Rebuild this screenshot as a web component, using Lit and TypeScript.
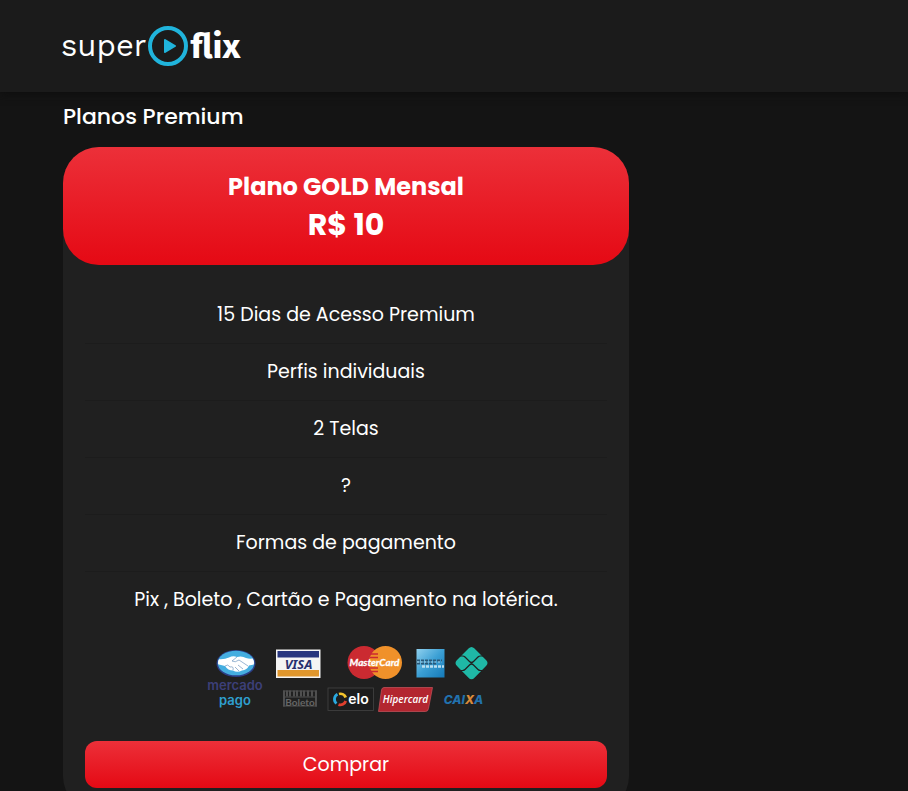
import { LitElement, html, css } from "lit";
import { customElement } from "lit/decorators.js";

@customElement("payment-logos")
class PaymentLogos extends LitElement {
  static styles = css`
    :host {
      display: block;
    }
    svg {
      display: block;
      margin: 0 auto;
    }
    .round {
      font-family: "Lato", "Liberation Sans", sans-serif;
      font-weight: 700;
    }
    .narrow {
      font-family: "Open Sans", sans-serif;
      font-weight: 600;
    }
    .wide {
      font-family: "Inter", "Liberation Sans", sans-serif;
      font-weight: 600;
    }
    .heavy {
      font-weight: 800;
    }
    .lotus {
      font-family: "Noto Sans", "Open Sans", sans-serif;
      font-weight: 700;
    }
    .italic {
      font-style: italic;
    }
  `;

  render() {
    return html`
      <svg width="284" height="68" viewBox="204 646 284 68" role="img" aria-label="Formas de pagamento aceitas">
        <defs>
          <linearGradient id="amex" x1="0" y1="0" x2="1" y2="1">
            <stop offset="0" stop-color="#8fd0ee" />
            <stop offset="0.5" stop-color="#3b9fd4" />
            <stop offset="1" stop-color="#1479b8" />
          </linearGradient>
          <clipPath id="oval"><ellipse cx="236" cy="663" rx="18" ry="12" /></clipPath>
        </defs>

        <!-- Mercado Pago -->
        <ellipse cx="236" cy="663.5" rx="19.5" ry="13.5" fill="#2c3e86" />
        <ellipse cx="236" cy="663" rx="18.3" ry="12.3" fill="#45aee0" />
        <g clip-path="url(#oval)">
          <path d="M217 659 Q224 660 229 657.500 Q233 655.500 237 657 Q242 655.500 246 658 Q251 659.500 256 657.500 L256 664 L249 665.500 Q247 670 242 670.500 Q237 673 233 670.500 Q228 670.500 225 666 L217 664 Z" fill="#fff" />
          <path d="M237 657 L232 661 Q235 663 239 660 L248 666 M238 665 L243 669 M235 667 L239 671 M225 666 Q228 663.500 230 667 Q234 666 233 670" fill="none" stroke="#6f97c0" stroke-width="0.7" />
        </g>
        <text class="wide" x="235" y="690" text-anchor="middle" font-size="13" fill="#3c3f78">mercado</text>
        <text class="wide" x="235" y="705" text-anchor="middle" font-size="13" fill="#2f9fcf">pago</text>

        <!-- Visa -->
        <rect x="276" y="649.500" width="44.500" height="28.500" fill="#f4f4f4" />
        <rect x="277.500" y="651" width="41.500" height="6.500" fill="#27357e" />
        <rect x="277.500" y="670" width="41.500" height="6.500" fill="#e0962c" />
        <text class="lotus italic" x="298.500" y="668.500" text-anchor="middle" font-size="13" fill="#27306f">VISA</text>

        <!-- MasterCard -->
        <circle cx="364" cy="662.500" r="16.500" fill="#cb2a31" />
        <circle cx="385.500" cy="662.500" r="16.500" fill="#f0912a" />
        <path d="M371 654h7M370 657.500h8M370 668h8M371 671.500h7" stroke="#cb2a31" stroke-width="1.5" />
        <text class="round italic" x="374.500" y="666" text-anchor="middle" font-size="10" fill="#fff" stroke="#fff" stroke-width="0.3">MasterCard</text>

        <!-- American Express -->
        <rect x="416.500" y="649" width="28" height="28.500" fill="url(#amex)" />
        <path d="M417 660.500h25M417 663.500h20" stroke="#2a5878" stroke-width="1.800" stroke-dasharray="3 1" />
        <path d="M417 662h25" stroke="#a8d4ea" stroke-width="1" stroke-dasharray="2 1.500" />
        <path d="M422 666.500h22" stroke="#b9def0" stroke-width="2.400" stroke-dasharray="3 1" />

        <!-- Pix -->
        <path d="M468.500 648.500 Q471.500 645.500 474.500 648.500 L486 660 Q489 663 486 666 L474.500 677.800 Q471.500 680.800 468.500 677.800 L457 666 Q454 663 457 660 Z" fill="#1fb8a6" />
        <path d="M459 656 H462.500 Q464 656 465 657 L469.500 661.500 Q471.500 663.500 473.500 661.500 L478 657 Q479 656 480.500 656 H484 M459 670.500 H462.500 Q464 670.500 465 669.500 L469.500 665 Q471.500 663 473.500 665 L478 669.500 Q479 670.500 480.500 670.500 H484" fill="none" stroke="#202020" stroke-width="1.200" />

        <!-- Boleto -->
        <path d="M284 690.500v16M287 690.500v6M290 690.500v6M294 690.500v6M297 690.500v6M301 690.500v6M304 690.500v6M308 690.500v6M312 690.500v6M316 690.500v16" stroke="#555" stroke-width="1.800" />
        <path d="M283 691h34M283 697h34M283 706h34" stroke="#505050" stroke-width="1" />
        <text class="round" x="300" y="705.500" text-anchor="middle" font-size="10" fill="#666">Boleto</text>

        <!-- Elo -->
        <rect x="328" y="688" width="45.500" height="22.500" fill="#1d1d1d" stroke="#444" stroke-width="0.800" />
        <g fill="none" stroke-width="2.800">
          <path d="M337.500 694.300 A5.500 5.500 0 0 0 336.500 703.500" stroke="#2aa9df" />
          <path d="M339 694 A5.500 5.500 0 0 1 345.700 697.500" stroke="#f3c32c" />
          <path d="M345.700 701 A5.500 5.500 0 0 1 338.500 704.600" stroke="#e0402f" />
        </g>
        <text class="wide" x="358.500" y="704" text-anchor="middle" font-size="14" fill="#fff">elo</text>

        <!-- Hipercard -->
        <path d="M384 687.500 H432.500 L428.500 708.500 Q428 711.500 425.500 711.500 H378.500 L381.500 690 Q382 687.500 384 687.500 Z" fill="#b32630" stroke="#c9555d" stroke-width="0.700" />
        <text class="narrow italic" x="405.500" y="703" text-anchor="middle" font-size="10" fill="#fff">Hipercard</text>

        <!-- Caixa -->
        <text class="wide heavy italic" x="463.500" y="704" text-anchor="middle" font-size="12" fill="#2272ae">CAI<tspan fill="#db8b3a">X</tspan>A</text>
      </svg>
    `;
  }
}

@customElement("app-root")
class AppRoot extends LitElement {
  static styles = css`
    :host {
      display: block;
      height: 100vh;
      overflow-y: auto;
      scrollbar-width: none;
      background: #141414;
      color: #fff;
      font-family: "Poppins", "Inter", "Open Sans", sans-serif;
    }
    .top {
      display: flex;
      align-items: center;
      height: 92px;
      padding: 0 61px;
      background: #1b1b1b;
      box-shadow: 0 2px 8px #0e0e0e;
    }
    .logo {
      display: flex;
      align-items: center;
      gap: 2px;
      color: #fff;
      text-decoration: none;
      line-height: 40px;
    }
    .super {
      font-family: "Work Sans", "Inter", sans-serif;
      font-size: 31px;
      font-weight: 400;
    }
    .flix {
      font-family: "Fira Sans", "Noto Sans", sans-serif;
      font-size: 35px;
      font-weight: 700;
    }
    .play {
      display: block;
      flex: none;
    }
    main {
      padding: 9px 63px 24px;
    }
    h1 {
      margin: 0 0 14px;
      font-size: 22px;
      line-height: 32px;
      font-weight: 500;
    }
    .card {
      max-width: 566px;
      border-radius: 36px;
      background: #202020;
      text-align: center;
      padding-bottom: 24px;
    }
    .head {
      box-sizing: border-box;
      height: 118px;
      padding-top: 21px;
      border-radius: 36px;
      background: linear-gradient(#ec3039, #e50914);
    }
    h2 {
      margin: 0;
      font-size: 24px;
      line-height: 38px;
      font-weight: 700;
    }
    .price {
      margin: 0;
      font-size: 30px;
      line-height: 38px;
      font-weight: 700;
    }
    ul {
      list-style: none;
      margin: 0 22px;
      padding: 22px 0 0;
    }
    li {
      box-sizing: border-box;
      height: 57px;
      border-bottom: 1px solid #1c1c1c;
      font-size: 19px;
      line-height: 56px;
    }
    li:last-child {
      border-bottom-color: transparent;
    }
    payment-logos {
      margin: 17px 0 27px;
    }
    .buy {
      display: block;
      width: calc(100% - 44px);
      height: 47px;
      margin: 0 22px;
      padding: 0;
      border: 0;
      border-radius: 12px;
      background: linear-gradient(#ec3039, #e50914);
      color: #fff;
      font-family: inherit;
      font-size: 19px;
      cursor: pointer;
    }
  `;

  private items = [
    "15 Dias de Acesso Premium",
    "Perfis individuais",
    "2 Telas",
    "?",
    "Formas de pagamento",
    "Pix , Boleto , Cartão e Pagamento na lotérica.",
  ];

  render() {
    return html`
      <header class="top">
        <a class="logo" href="#">
          <span class="super">super</span>
          <svg class="play" width="40" height="40" viewBox="0 0 40 40" aria-hidden="true">
            <circle cx="20" cy="20" r="18" fill="none" stroke="#20b4dc" stroke-width="4" />
            <path d="M17 14 L27 20 L17 26 Z" fill="#20b4dc" stroke="#20b4dc" stroke-width="2" stroke-linejoin="round" />
          </svg>
          <span class="flix">flix</span>
        </a>
      </header>
      <main>
        <h1>Planos Premium</h1>
        <section class="card">
          <div class="head">
            <h2>Plano GOLD Mensal</h2>
            <p class="price">R$ 10</p>
          </div>
          <ul>
            ${this.items.map((item) => html`<li>${item}</li>`)}
          </ul>
          <payment-logos></payment-logos>
          <button class="buy" type="button">Comprar</button>
        </section>
      </main>
    `;
  }
}
